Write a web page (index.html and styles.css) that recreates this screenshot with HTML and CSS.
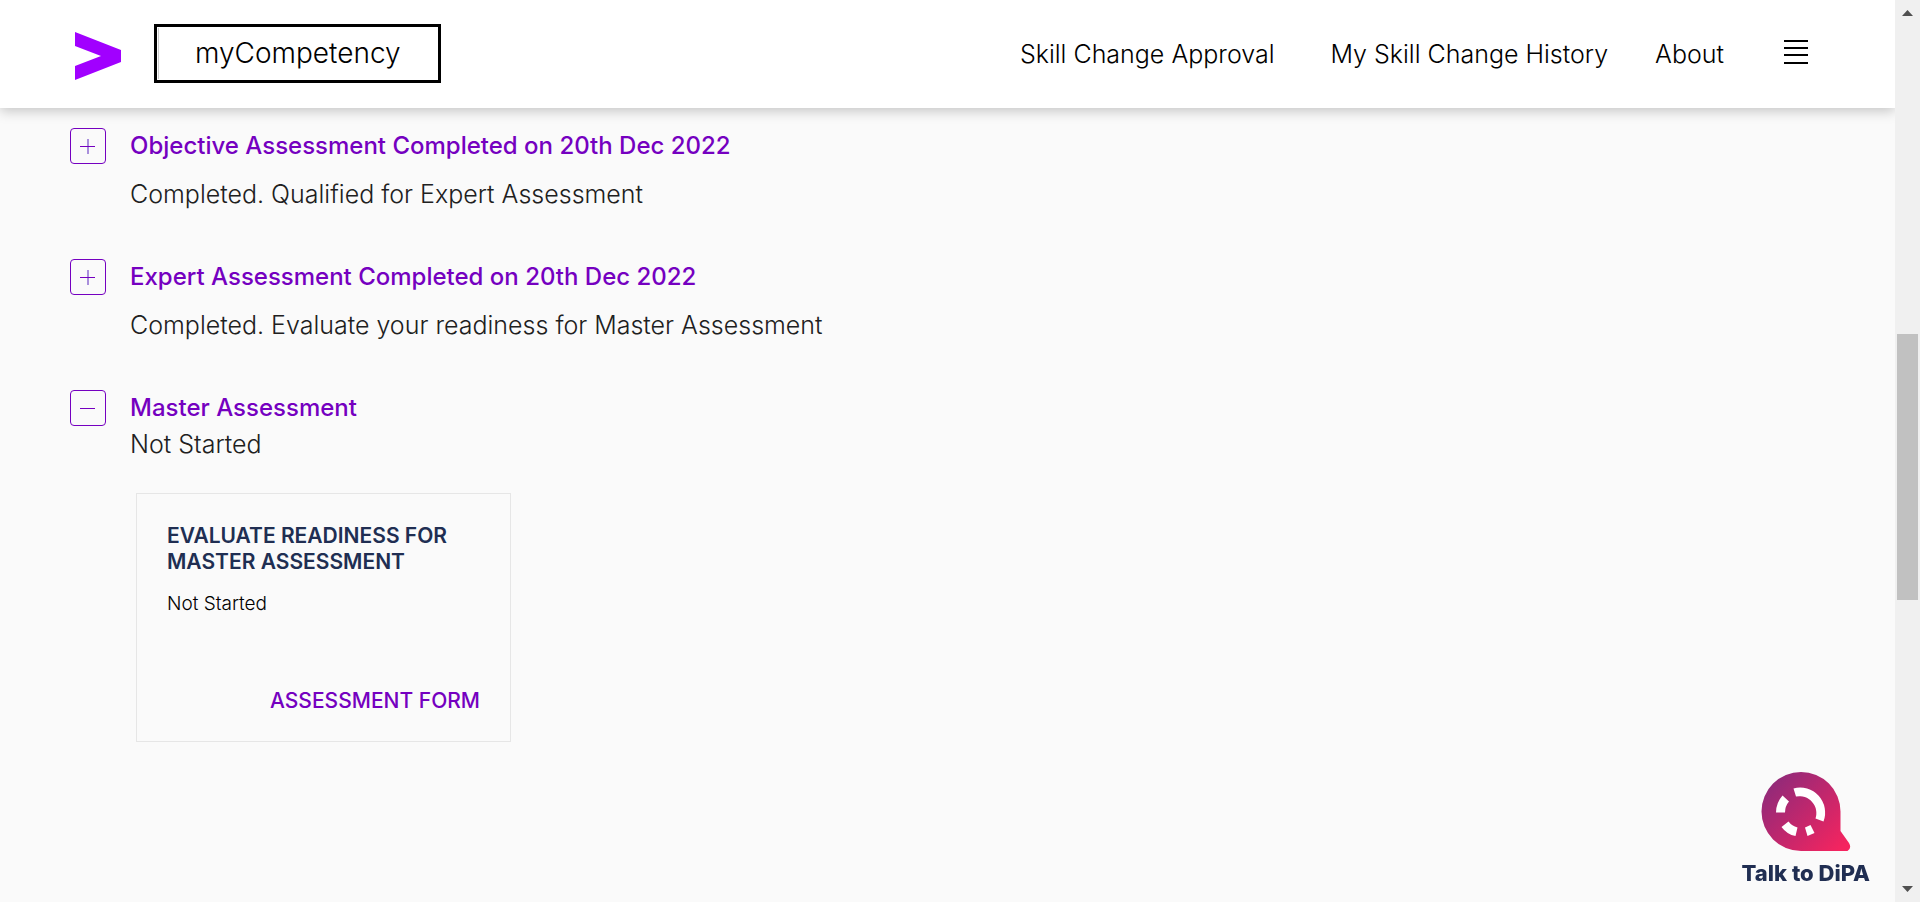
FILE: index.html
```html
<!DOCTYPE html>
<html lang="en">
<head>
<meta charset="utf-8">
<title>myCompetency</title>
<link rel="stylesheet" href="styles.css">
</head>
<body>
<div class="page">
  <header class="header">
    <a class="logo" href="#" aria-label="Home">
      <svg width="46" height="48" viewBox="0 0 46 48"><path d="M0 0 46 18V30L0 48V34L26 24 0 14Z" fill="#a100ff"/></svg>
    </a>
    <a class="brand" href="#"><span class="brand-name">myCompetency</span></a>
    <nav class="nav">
      <a class="nav-link nav-link-first" href="#">Skill Change Approval</a>
      <a class="nav-link" href="#">My Skill Change History</a>
      <a class="nav-link" href="#">About</a>
    </nav>
    <button class="menu" type="button" aria-label="Menu">
      <svg width="24" height="26" viewBox="0 0 24 26"><path d="M0 2H24M0 9H24M0 16H24M0 24H24" stroke="#000" stroke-width="2"/></svg>
    </button>
  </header>
  <main class="content">
    <section class="step">
      <button class="toggle" type="button" aria-label="Expand Objective Assessment">
        <svg width="16" height="16" viewBox="0 0 16 16"><path class="stroke stroke-soft" d="M8 1V16"/><path class="stroke" d="M0 8.5H15"/></svg>
      </button>
      <div class="step-body">
        <h2 class="step-title">Objective Assessment Completed on 20th Dec 2022</h2>
        <p class="step-status step-status-spaced">Completed. Qualified for Expert Assessment</p>
      </div>
    </section>
    <section class="step">
      <button class="toggle" type="button" aria-label="Expand Expert Assessment">
        <svg width="16" height="16" viewBox="0 0 16 16"><path class="stroke stroke-soft" d="M8 1V16"/><path class="stroke" d="M0 8.5H15"/></svg>
      </button>
      <div class="step-body">
        <h2 class="step-title">Expert Assessment Completed on 20th Dec 2022</h2>
        <p class="step-status step-status-spaced">Completed. Evaluate your readiness for Master Assessment</p>
      </div>
    </section>
    <section class="step">
      <button class="toggle" type="button" aria-label="Collapse Master Assessment">
        <svg width="16" height="16" viewBox="0 0 16 16"><path class="stroke" d="M0 8.5H15"/></svg>
      </button>
      <div class="step-body">
        <h2 class="step-title">Master Assessment</h2>
        <p class="step-status">Not Started</p>
        <article class="card">
          <h3 class="card-title">EVALUATE READINESS FOR MASTER ASSESSMENT</h3>
          <p class="card-status">Not Started</p>
          <a class="card-link" href="#">ASSESSMENT FORM</a>
        </article>
      </div>
    </section>
  </main>
  <button class="chat" type="button">
    <svg width="90" height="80" viewBox="0 0 90 80">
      <defs><linearGradient id="chat-fill" x1="8" y1="8" x2="80" y2="78" gradientUnits="userSpaceOnUse"><stop offset="0" stop-color="#8e2a7a"/><stop offset="1" stop-color="#f5245f"/></linearGradient></defs>
      <path d="M40 0A39.500 39.500 0 0 1 79.500 39.500V59L88 71Q91 76 86.500 79H40A39.500 39.500 0 0 1 40 0Z" fill="url(#chat-fill)"/>
      <g fill="#fff">
        <path d="M32.500 16.500A25 25 0 0 1 62.500 49.500L54.500 46.500A17 17 0 0 0 35 24.500Z"/>
        <path d="M21.500 23.500 28 29.500A17 17 0 0 0 24 40.500H15A26 26 0 0 1 21.500 23.500Z"/>
        <path d="M20.500 55 27.500 49.500A16 16 0 0 0 36.500 55.500L34.500 64Q26 62.500 20.500 55Z"/>
        <path d="M44 55.500 49.500 53 53.500 61 46.500 64Z"/>
      </g>
    </svg>
    <span class="chat-label">Talk to DiPA</span>
  </button>
</div>
<div class="scrollbar" aria-hidden="true">
  <svg width="11" height="6" viewBox="0 0 11 6"><path d="M0 6 5.500 0 11 6Z" fill="#505050"/></svg>
  <div class="track"><div class="thumb"></div></div>
  <svg width="11" height="6" viewBox="0 0 11 6"><path d="M0 0H11L5.500 6Z" fill="#505050"/></svg>
</div>
</body>
</html>
```
FILE: styles.css
```css
* { box-sizing: border-box; }
body {
  margin: 0;
  min-height: 100vh;
  display: grid;
  grid-template-columns: 1fr 25px;
  background: #fafafa;
  color: #000;
  font-family: Inter, "Liberation Sans", sans-serif;
  font-weight: 300;
}
h2, h3, p { margin: 0; }
a { color: inherit; text-decoration: none; }
svg { display: block; }
button { font: inherit; padding: 0; border: 0; background: none; cursor: pointer; }

.page { display: flex; flex-direction: column; min-width: 0; overflow: hidden; }
.header {
  display: flex;
  align-items: center;
  height: 108px;
  padding: 0 87px 0 75px;
  background: #fff;
  box-shadow: 0 3px 12px rgba(0, 0, 0, 0.22);
}
.logo { padding-top: 4px; }
.brand {
  margin: 0 0 1px 33px;
  padding: 1px;
  border: 3px solid #000;
  font-size: 28px;
  line-height: 50px;
}
.brand-name { display: block; padding: 0 36px 1px; border-left: 1px solid #ccc; }
.nav { display: flex; gap: 47px; margin-left: auto; font-size: 25px; line-height: 32px; }
.nav-link-first { margin-right: 9px; }
.menu { margin: 0 0 4px 60px; }

.content { flex: 1; padding: 20px 70px; }
.step { display: flex; align-items: flex-start; gap: 24px; margin-bottom: 47px; }
.toggle {
  display: grid;
  place-items: center;
  flex: none;
  width: 36px;
  height: 36px;
  border: 1px solid #7500c0;
  border-radius: 4px;
}
.stroke { stroke: #7500c0; fill: none; }
.stroke-soft { stroke: #a98fdc; stroke-width: 2; }
.step-title { font-size: 24px; line-height: 36px; font-weight: 500; color: #7500c0; }
.step-status { font-size: 25px; line-height: 36px; color: #202020; }
.step-status-spaced { margin-top: 12px; }

.card {
  display: flex;
  flex-direction: column;
  width: 375px;
  min-height: 249px;
  margin: 31px 0 0 6px;
  padding: 29px 30px 26px;
  border: 1px solid #e6e6e6;
}
.card-title { font-size: 21px; line-height: 26px; font-weight: 600; color: #202e52; }
.card-status { margin-top: 16px; font-size: 19px; line-height: 26px; }
.card-link { margin-top: auto; align-self: flex-end; font-size: 21px; line-height: 28px; font-weight: 500; color: #7500c0; }

.chat {
  position: fixed;
  right: 50px;
  bottom: 15px;
  display: flex;
  flex-direction: column;
  align-items: center;
  gap: 7px;
}
.chat-label { font-size: 22px; line-height: 28px; font-weight: 800; color: #202e52; }

.scrollbar {
  display: flex;
  flex-direction: column;
  align-items: center;
  gap: 9px;
  padding: 10px 2px;
  background: #f0f0f0;
}
.track { flex: 1; align-self: stretch; display: grid; grid-template-rows: 309fr 266fr 277fr; }
.thumb { grid-row: 2; background: #c1c1c1; }
```
